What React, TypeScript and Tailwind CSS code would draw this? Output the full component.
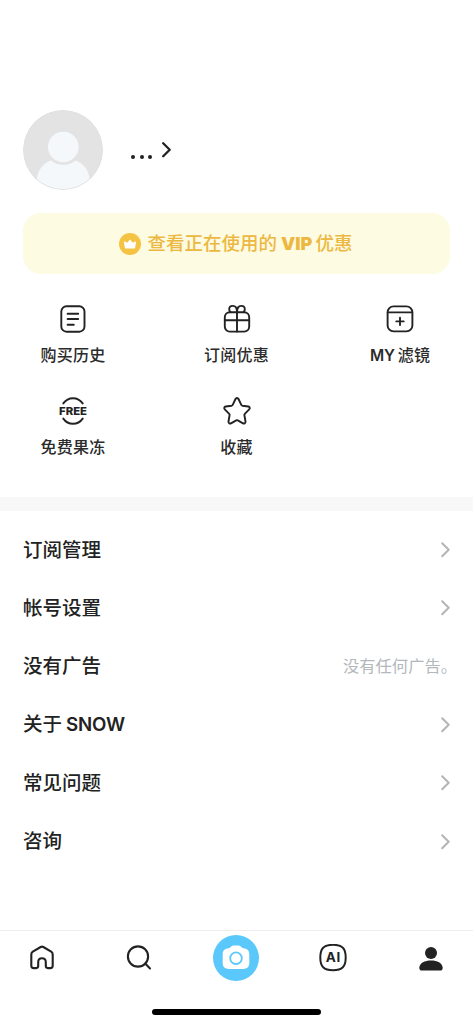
import React from 'react';

type IconProps = { className?: string; strokeWidth?: number };

const strokeProps = {
  fill: 'none',
  stroke: 'currentColor',
  strokeWidth: 1.9,
  strokeLinecap: 'round' as const,
  strokeLinejoin: 'round' as const,
};

const HistoryIcon = () => (
  <svg width="30" height="30" viewBox="0 0 30 30" {...strokeProps}>
    <rect x="3.3" y="2.3" width="23.2" height="25.4" rx="5.2" />
    <path d="M9.6 9.7h10.6M9.6 15h10.6M9.6 20.7h6.2" />
  </svg>
);

const GiftIcon = () => (
  <svg width="30" height="30" viewBox="0 0 30 30" {...strokeProps}>
    <rect x="2.8" y="8.2" width="24.4" height="19.4" rx="5" />
    <path d="M2.8 16.2h24.4M15 8.2v19.4" />
    <path d="M15 8.2C15 4.2 13.2 1.9 10.8 1.9S7.2 3.6 7.2 5.2c0 1.2.5 2.2 1.3 3M15 8.2c0-4 1.8-6.300 4.200-6.300s3.600 1.700 3.600 3.300c0 1.200-.5 2.200-1.300 3" />
  </svg>
);

const FilterIcon = () => (
  <svg width="30" height="30" viewBox="0 0 30 30" {...strokeProps}>
    <rect x="2.6" y="2.4" width="24.8" height="25" rx="6" />
    <path d="M2.800 8.400h24.400M15 13.700v7.400M11.300 17.400h7.400" />
  </svg>
);

const FreeIcon = () => (
  <svg width="30" height="30" viewBox="0 0 30 30" className="overflow-visible" {...strokeProps}>
    <path d="M5.300 7.400C7.600 4.100 11 2.200 15 2.200s7.400 1.900 9.700 5.200M5.300 22.600c2.300 3.300 5.700 5.200 9.700 5.200s7.400-1.900 9.700-5.200" />
    <text
      x="15"
      y="18.8"
      textAnchor="middle"
      textLength="28"
      lengthAdjust="spacingAndGlyphs"
      fill="currentColor"
      stroke="none"
      className="font-[Inter] text-[10.500px] font-extrabold"
    >
      FREE
    </text>
  </svg>
);

const StarIcon = () => (
  <svg width="30" height="30" viewBox="0 0 30 30" {...strokeProps}>
    <path d="M13.500 3c.6-1.300 2.400-1.300 3 0l2.800 5.900c.2.400.6.700 1 .8l6 .8c1.400.2 2 1.900.9 2.900l-4.400 4.400c-.3.300-.5.800-.4 1.300l1.100 6.400c.2 1.400-1.200 2.400-2.500 1.800l-5.200-2.900c-.5-.3-1.100-.3-1.600 0L9 27.300c-1.300.6-2.700-.4-2.500-1.800l1.100-6.400c.1-.5-.1-1-.4-1.300l-4.400-4.400c-1.100-1-.5-2.700.9-2.900l6-.8c.4-.1.8-.4 1-.8z" />
  </svg>
);

const ChevronIcon = ({ className, strokeWidth = 2 }: IconProps) => (
  <svg width="9" height="16" viewBox="0 0 9 16" className={className} {...strokeProps} strokeWidth={strokeWidth}>
    <path d="M1.200 1.300 7.700 7.800l-6.500 6.500" />
  </svg>
);

const CrownIcon = () => (
  <svg width="22" height="22" viewBox="0 0 22 22">
    <circle cx="11" cy="11" r="11" fill="#f5c344" />
    <path
      d="M6.600 14.800 5.600 9.200l3 1.400L11 7.400l2.400 3.200 3-1.400-1 5.600z"
      fill="#fff"
      stroke="#fff"
      strokeWidth="1.400"
      strokeLinejoin="round"
    />
  </svg>
);

const Avatar = () => (
  <svg width="80" height="80" viewBox="0 0 80 80" className="rounded-full">
    <circle cx="40" cy="40" r="40" fill="#e3e3e3" />
    <circle cx="40.300" cy="37" r="15.300" fill="#f5f8fa" />
    <path
      d="M13.500 70C15 59.500 20.500 53 28 50.600c3.300 2.700 7.500 4.300 12.300 4.300s9-1.600 12.300-4.300C60 53 65.500 59.500 67 70L60 80H20z"
      fill="#f5f8fa"
    />
    <circle cx="40" cy="40" r="39.500" fill="none" stroke="#dfe1e2" />
  </svg>
);

const HomeIcon = () => (
  <svg width="28" height="28" viewBox="0 0 28 28" {...strokeProps} strokeWidth={2.1}>
    <path d="M12.700 3 4.800 7.700c-1.100.7-1.500 1.500-1.500 2.700v11.300c0 1.600.8 2.400 2.400 2.400h2.500c1.300 0 2-.7 2-2v-3.900c0-2.300 1.600-3.900 3.800-3.900s3.800 1.600 3.800 3.900v3.900c0 1.300.7 2 2 2h2.500c1.600 0 2.400-.8 2.400-2.400V10.400c0-1.200-.4-2-1.500-2.700L15.300 3c-.9-.5-1.700-.5-2.600 0z" />
  </svg>
);

const SearchIcon = () => (
  <svg width="28" height="28" viewBox="0 0 28 28" {...strokeProps} strokeWidth={2.1}>
    <circle cx="13" cy="12.500" r="10.100" />
    <path d="m20.200 19.600 4.800 4.800" />
  </svg>
);

const CameraIcon = () => (
  <svg width="28" height="26" viewBox="0 0 28 26">
    <path
      d="M9.500 1.300C10 .8 10.600.6 11.400.6h5.200c.8 0 1.400.2 1.900.7l1.400 1.300c.4.4.9.600 1.500.700 3.700.3 5.900 2.300 5.900 5.900v8.500c0 4.200-2 6.200-6.200 6.200H6.900C2.700 23.900.7 21.900.7 17.700V9.200c0-3.600 2.200-5.600 5.900-5.900.6-.1 1.100-.3 1.500-.7z"
      fill="#fff"
    />
    <circle cx="14" cy="13.200" r="5.800" fill="none" stroke="#5ac8fa" strokeWidth="1.800" />
  </svg>
);

const AiIcon = () => (
  <svg width="28" height="28" viewBox="0 0 28 28" {...strokeProps} strokeWidth={2}>
    <path d="M14 .8c9.300 0 12.700 3.500 12.700 12.700S23.300 26.200 14 26.200 1.300 22.700 1.300 13.500 4.700.8 14 .8z" />
    <text
      x="14"
      y="18.200"
      textAnchor="middle"
      textLength="14.500"
      fill="currentColor"
      stroke="none"
      className="font-[Inter] text-[13.500px] font-bold"
    >
      AI
    </text>
  </svg>
);

const ProfileIcon = () => (
  <svg width="28" height="28" viewBox="0 0 28 28" fill="currentColor">
    <circle cx="14" cy="9" r="6" />
    <path d="M2.300 23.500c.5-4.600 5.400-7 11.700-7s11.200 2.400 11.700 7c.1 1.900-.8 3.100-2.500 3.100H4.800c-1.700 0-2.600-1.200-2.500-3.100z" />
  </svg>
);

const shortcuts = [
  [
    { label: '购买历史', icon: <HistoryIcon /> },
    { label: '订阅优惠', icon: <GiftIcon /> },
    { label: 'MY 滤镜', icon: <FilterIcon /> },
  ],
  [
    { label: '免费果冻', icon: <FreeIcon /> },
    { label: '收藏', icon: <StarIcon /> },
    null,
  ],
];

const menu: { label: string; note?: string }[] = [
  { label: '订阅管理' },
  { label: '帐号设置' },
  { label: '没有广告', note: '没有任何广告。' },
  { label: '关于 SNOW' },
  { label: '常见问题' },
  { label: '咨询' },
];

// Latin runs use Inter, Chinese glyphs fall through to Noto
const Label = ({ text }: { text: string }) => (
  <>
    {text.split(' ').map((part, i) => (
      <span key={i} className={/[A-Z]/.test(part) ? 'text-[0.96em] font-semibold tracking-[-0.01em]' : ''}>
        {part}
      </span>
    ))}
  </>
);

export default function App() {
  return (
    <div className="flex h-[1024px] w-[473px] flex-col overflow-hidden bg-white font-[Inter,'Noto_Sans_CJK_SC',sans-serif] text-[#222]">
      <header className="mt-[110px] flex h-20 items-center pl-[23px]">
        <Avatar />
        <button className="ml-7 flex items-center gap-[10px]">
          <span className="flex gap-[4.500px] pt-[13px]" aria-label="...">
            <i className="size-1 rounded-full bg-[#222]" />
            <i className="size-1 rounded-full bg-[#222]" />
            <i className="size-1 rounded-full bg-[#222]" />
          </span>
          <ChevronIcon strokeWidth={2.3} />
        </button>
      </header>

      <button className="mx-[23px] mt-[23px] flex h-[61px] shrink-0 items-center justify-center rounded-[18px] bg-[#fdfbe1] pr-[2px] text-[18.500px] font-medium text-[#edb841]">
        <CrownIcon />
        <span className="ml-[7px]">查看正在使用的</span>
        <span className="ml-1 mr-[3px] text-[18px] font-black">VIP</span>
        <span>优惠</span>
      </button>

      <section className="mt-[30px] flex flex-col gap-[28px] px-[23px]">
        {shortcuts.map((row, r) => (
          <div key={r} className="flex justify-between">
            {row.map((item, i) => (
              <div key={i} className="flex h-16 w-[100px] flex-col items-center">
                {item?.icon}
                {item && (
                  <span className="mt-[9px] flex items-baseline gap-[3px] whitespace-nowrap text-[16px] font-medium leading-6 tracking-[0.2px] text-[#2b2b2b]">
                    <Label text={item.label} />
                  </span>
                )}
              </div>
            ))}
          </div>
        ))}
      </section>

      <div className="mt-[37px] h-[14px] shrink-0 bg-[#f8f8f8]" />

      <ul className="mt-[10px] px-[23px]">
        {menu.map((item) => (
          <li key={item.label} className="flex h-[58.300px] items-center justify-between">
            <span className="flex items-baseline gap-[4px] text-[19.500px] font-medium">
              <Label text={item.label} />
            </span>
            {item.note ? (
              <span className="-mr-[7px] -mt-[2px] text-[16.300px] text-[#b2b8bc]">{item.note}</span>
            ) : (
              <ChevronIcon className="text-[#b5b5b7]" />
            )}
          </li>
        ))}
      </ul>

      <nav className="mt-auto flex h-[94px] shrink-0 flex-col items-center border-t border-[#eee]">
        <div className="mt-1 flex h-[46px] w-full items-center justify-between pl-[18.500px] pr-[19.500px]">
          <span className="flex w-[46px] justify-center"><HomeIcon /></span>
          <span className="flex w-[46px] justify-center"><SearchIcon /></span>
          <span className="flex size-[46px] items-center justify-center rounded-full bg-[#5ac8fa]">
            <CameraIcon />
          </span>
          <span className="flex w-[46px] justify-center"><AiIcon /></span>
          <span className="flex w-[46px] justify-center"><ProfileIcon /></span>
        </div>
        <div className="mt-[28px] h-[6px] w-[169px] rounded-full bg-black" />
      </nav>
    </div>
  );
}
